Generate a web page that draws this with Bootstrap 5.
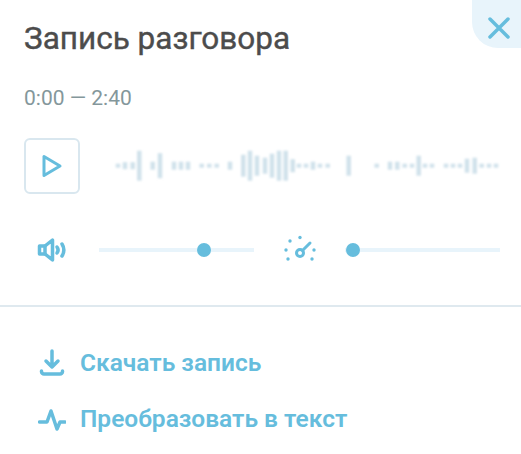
<!DOCTYPE html>
<html lang="ru">
  <head>
    <meta charset="UTF-8" />
    <meta name="viewport" content="width=device-width, initial-scale=1.0" />
    <title>Запись разговора</title>
    <link
      href="https://cdn.jsdelivr.net/npm/bootstrap@5.3.1/dist/css/bootstrap.min.css"
      rel="stylesheet"
    />
    <style>
      body {
        background-color: #fff;
        font-family: Roboto, "Noto Sans", sans-serif;
        overflow: hidden;
      }
      .panel {
        height: 454px;
      }
      .panel-top {
        padding: 21px 24px 0;
        height: 307px;
        border-bottom: 2px solid #dfe9ef;
      }
      .close-corner {
        position: absolute;
        top: 0;
        right: 0;
        width: 49px;
        height: 48px;
        background-color: #e8f4fb;
        border: 0;
        border-bottom-left-radius: 26px;
        padding: 8px 10px 0 0;
        text-align: right;
      }
      .panel-title {
        font-size: 31.5px;
        font-weight: 400;
        -webkit-text-stroke: 0.4px #4c4c4c;
        line-height: 36px;
        color: #4c4c4c;
        margin: 0;
      }
      .time-range {
        font-size: 21px;
        line-height: 24px;
        color: #84979b;
        margin-top: 29px;
      }
      .play-btn {
        width: 56px;
        height: 56px;
        flex: none;
        background: #fff;
        border: 2px solid #d9e7ef;
        border-radius: 6px;
        padding: 0;
      }
      .player-row {
        margin-top: 28px;
      }
      .wave {
        margin-left: 32px;
        margin-right: -10px;
      }
      .controls-row {
        margin-top: 28px;
        height: 56px;
      }
      .speaker-icon {
        margin-left: 13px;
      }
      .gauge-icon {
        margin-left: 28px;
      }
      .track {
        position: relative;
        height: 4px;
        background-color: #e8f4fb;
      }
      .volume-track {
        width: 155px;
        margin-left: 32px;
      }
      .speed-track {
        margin-left: 27px;
        margin-right: -3px;
      }
      .thumb {
        position: absolute;
        top: -5px;
        width: 14px;
        height: 14px;
        margin-left: -7px;
        border-radius: 50%;
        background-color: #66bddd;
      }
      .panel-links {
        padding: 40px 0 0 38px;
      }
      .action-link {
        display: flex;
        align-items: center;
        gap: 14px;
        height: 32px;
        margin-bottom: 24px;
        font-size: 24.5px;
        font-weight: 600;
        color: #66bddd;
        text-decoration: none;
      }
    </style>
  </head>
  <body>
    <div class="panel position-relative">
      <button class="close-corner" type="button" aria-label="Закрыть">
        <svg width="24" height="24" viewBox="0 0 24 24" fill="none" stroke="#66bddd" stroke-width="3.500" stroke-linecap="round">
          <path d="M3 3 21 21M21 3 3 21" />
        </svg>
      </button>

      <div class="panel-top">
        <h1 class="panel-title">Запись разговора</h1>
        <div class="time-range">0:00 — 2:40</div>

        <div class="player-row d-flex align-items-center">
          <button class="play-btn d-flex align-items-center justify-content-center" type="button" aria-label="Play">
            <svg width="24" height="26" viewBox="0 0 24 26" fill="none" stroke="#66bddd" stroke-width="3" stroke-linejoin="round">
              <path d="M4 3.500v19l16-9.500z" />
            </svg>
          </button>
          <svg class="wave flex-shrink-0" width="392" height="40" viewBox="112 147 392 40">
            <defs>
              <filter id="soft" x="-10%" y="-10%" width="120%" height="120%">
                <feGaussianBlur stdDeviation="1" />
              </filter>
            </defs>
            <g id="waveBars" fill="#d0e2eb" filter="url(#soft)"></g>
          </svg>
        </div>

        <div class="controls-row d-flex align-items-center">
          <svg class="speaker-icon flex-shrink-0" width="30" height="26" viewBox="0 0 30 26" fill="none" stroke="#66bddd" stroke-width="3.500" stroke-linecap="round" stroke-linejoin="round">
            <path d="M2.500 9H8l7.500-6v20L8 17H2.500z" />
            <path d="M8 9v8" />
            <path d="M20 10c1.500 2 1.500 4 0 6" />
            <path d="M25 7c2.500 4 2.500 8 0 12" />
          </svg>
          <div class="track volume-track">
            <div class="thumb" style="left: 105px"></div>
          </div>
          <svg class="gauge-icon flex-shrink-0" width="36" height="30" viewBox="0 0 36 30" fill="#66bddd" stroke="none">
            <circle cx="8" cy="6" r="1.700" />
            <circle cx="18" cy="2.500" r="1.700" />
            <circle cx="4" cy="15" r="1.700" />
            <circle cx="32" cy="15" r="1.700" />
            <circle cx="6" cy="24" r="1.700" />
            <circle cx="30" cy="24" r="1.700" />
            <circle cx="18" cy="18" r="3.500" fill="none" stroke="#66bddd" stroke-width="3" />
            <path d="M20.500 15.500 28 8" fill="none" stroke="#66bddd" stroke-width="3" stroke-linecap="round" />
          </svg>
          <div class="track speed-track flex-grow-1">
            <div class="thumb" style="left: 8px"></div>
          </div>
        </div>
      </div>

      <div class="panel-links">
        <a class="action-link" href="#">
          <svg width="28" height="28" viewBox="0 0 28 28" fill="none" stroke="#66bddd" stroke-width="3.500" stroke-linecap="round" stroke-linejoin="round">
            <path d="M14 2v16M8 12l6 6 6-6" />
            <path d="M3.500 22v.5A2.500 2.500 0 0 0 6 25h16a2.500 2.500 0 0 0 2.500-2.500V22" />
          </svg>
          Скачать запись
        </a>
        <a class="action-link" href="#">
          <svg width="28" height="28" viewBox="0 0 28 28" fill="none" stroke="#66bddd" stroke-width="3.500" stroke-linecap="round" stroke-linejoin="round">
            <path d="M1.500 17H9l4-11 6 18 3-7h5" />
          </svg>
          Преобразовать в текст
        </a>
      </div>
    </div>

    <script>
      // x, height of each waveform bar
      const bars = [
        [118, 4], [125, 7], [132.7, 7], [139.3, 30], [152.7, 8], [160, 25], [174, 8],
        [181, 8], [188, 8], [201.7, 4], [209.3, 4], [216.7, 4], [230, 8], [243.3, 22],
        [250, 30], [257, 20], [265, 16], [272, 24], [279, 30], [285.7, 30], [292.7, 13],
        [299, 4], [306, 4], [313, 8], [320, 4], [327.7, 4], [348.7, 20], [376.7, 4],
        [390, 8], [397.3, 8], [404.7, 4], [412, 4], [418.7, 20], [425, 4], [432, 4],
        [446, 4], [453, 4], [460, 4], [467, 14], [474.7, 16], [481.7, 4], [489, 4], [496, 4],
      ];
      const ns = "http://www.w3.org/2000/svg";
      const group = document.getElementById("waveBars");
      bars.forEach(([x, h]) => {
        const rect = document.createElementNS(ns, "rect");
        rect.setAttribute("x", x - 2.25);
        rect.setAttribute("y", 166.7 - h / 2);
        rect.setAttribute("width", 4.5);
        rect.setAttribute("height", h);
        group.appendChild(rect);
      });
    </script>
    <script src="https://cdn.jsdelivr.net/npm/bootstrap@5.3.1/dist/js/bootstrap.bundle.min.js"></script>
  </body>
</html>
